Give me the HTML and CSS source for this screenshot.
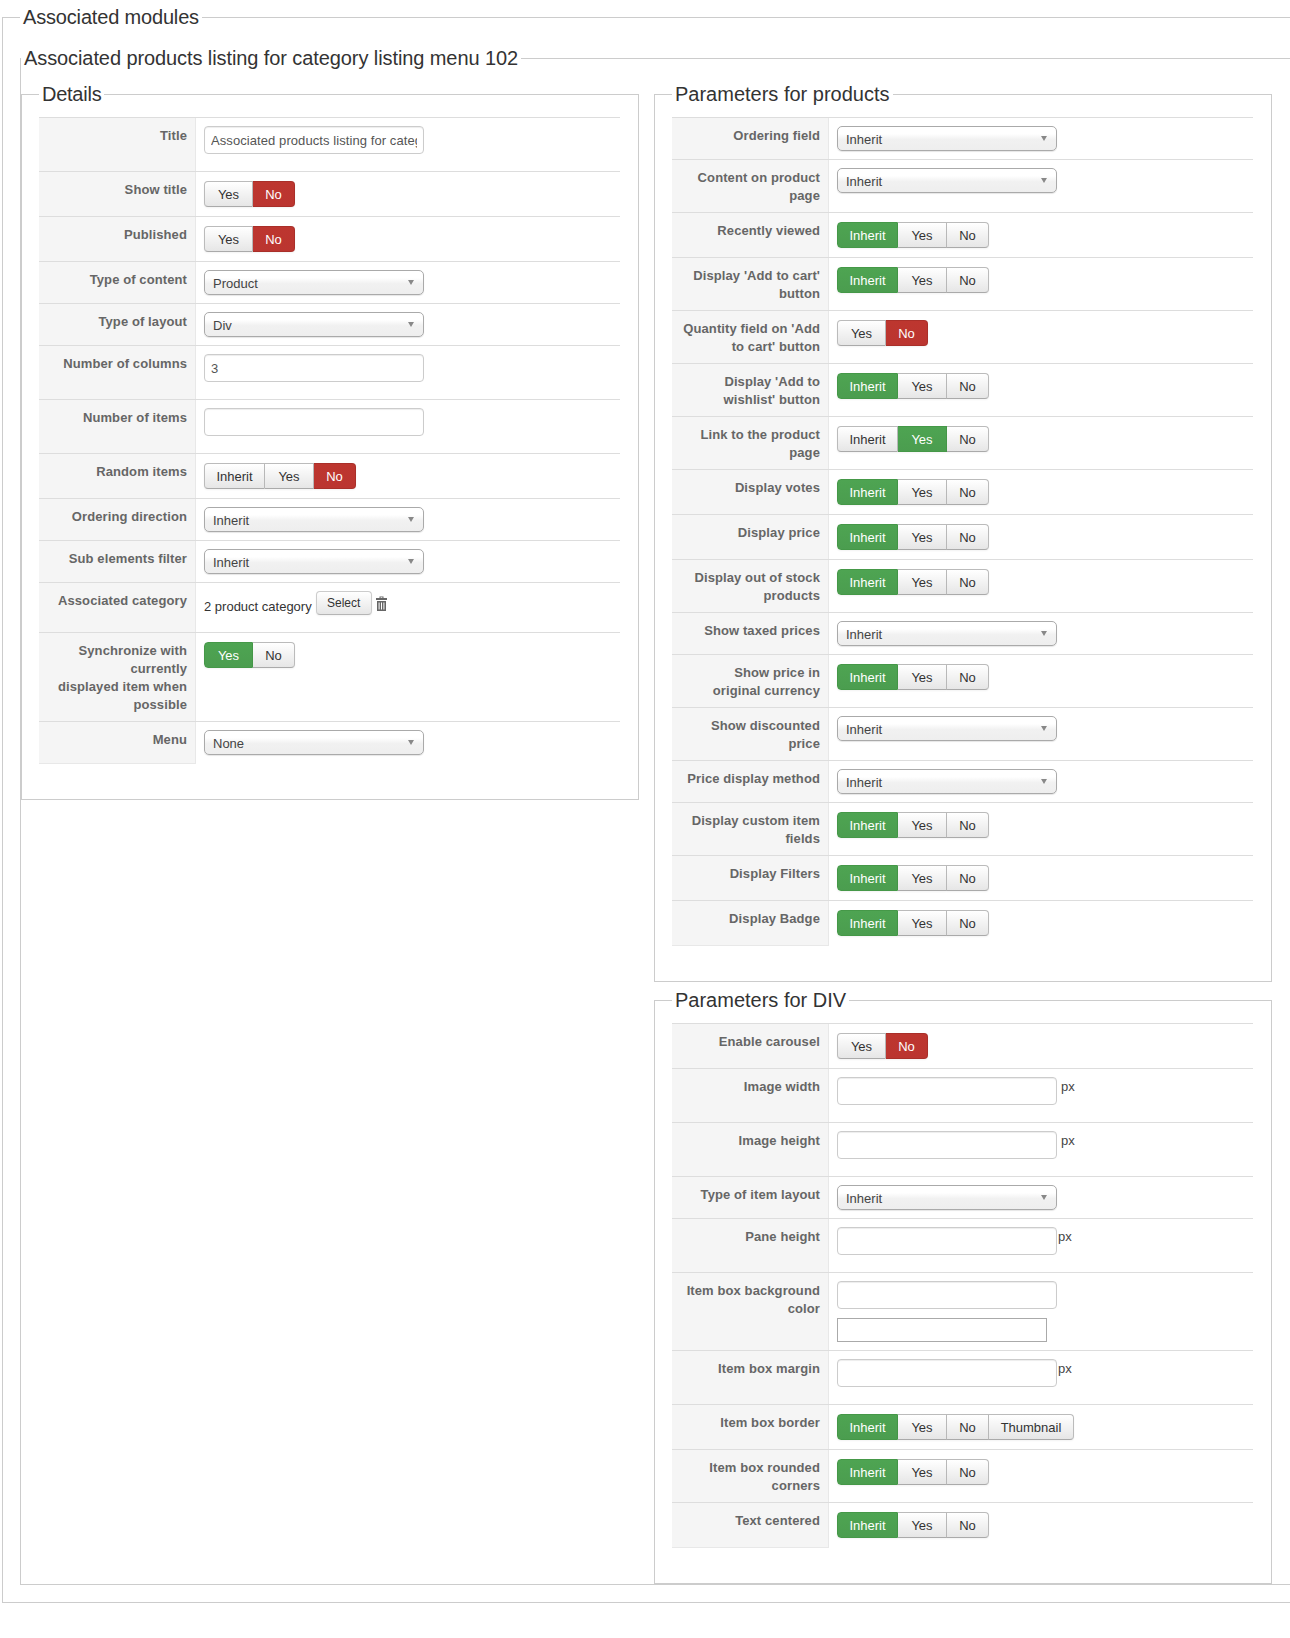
FILE: index.html
```html
<!DOCTYPE html>
<html lang="en">
<head>
<meta charset="utf-8">
<title>Associated modules</title>
<link rel="stylesheet" href="styles.css">
</head>
<body>
<fieldset class="fs fs-outer">
  <legend>Associated modules</legend>
  <fieldset class="fs fs-inner">
    <legend>Associated products listing for category listing menu 102</legend>
    <div class="columns">
      <fieldset class="fs panel panel-left">
        <legend>Details</legend>
        <div class="form">
          <div class="row"><div class="lbl">Title</div><div class="ctl"><input class="txt" type="text" value="Associated products listing for category listing menu 102"></div></div>
          <div class="row"><div class="lbl">Show title</div><div class="ctl"><div class="tg"><span class="b yes">Yes</span><span class="b no red">No</span></div></div></div>
          <div class="row"><div class="lbl">Published</div><div class="ctl"><div class="tg"><span class="b yes">Yes</span><span class="b no red">No</span></div></div></div>
          <div class="row"><div class="lbl">Type of content</div><div class="ctl"><div class="sel">Product<i class="arrow"></i></div></div></div>
          <div class="row"><div class="lbl">Type of layout</div><div class="ctl"><div class="sel">Div<i class="arrow"></i></div></div></div>
          <div class="row"><div class="lbl">Number of columns</div><div class="ctl"><input class="txt" type="text" value="3"></div></div>
          <div class="row"><div class="lbl">Number of items</div><div class="ctl"><input class="txt" type="text"></div></div>
          <div class="row"><div class="lbl">Random items</div><div class="ctl"><div class="tg"><span class="b inh">Inherit</span><span class="b yes">Yes</span><span class="b no red">No</span></div></div></div>
          <div class="row"><div class="lbl">Ordering direction</div><div class="ctl"><div class="sel">Inherit<i class="arrow"></i></div></div></div>
          <div class="row"><div class="lbl">Sub elements filter</div><div class="ctl"><div class="sel">Inherit<i class="arrow"></i></div></div></div>
          <div class="row"><div class="lbl">Associated category</div><div class="ctl"><div class="cat"><span class="cat-name">2 product category</span><span class="btn">Select</span><svg class="trash" viewBox="0 0 11 15" width="11" height="15" aria-hidden="true"><path d="M3.5 2V.5h4V2H11v2H0V2z M4.6 1.3V2h1.8v-.7z" fill-rule="evenodd"/><path d="M1 5h9v10H1z M2.6 6.5v7h1v-7z M5 6.5v7h1v-7z M7.4 6.5v7h1v-7z" fill-rule="evenodd"/></svg></div></div></div>
          <div class="row"><div class="lbl">Synchronize with currently<br>displayed item when possible</div><div class="ctl"><div class="tg"><span class="b yes green">Yes</span><span class="b no">No</span></div></div></div>
          <div class="row row-last"><div class="lbl">Menu</div><div class="ctl"><div class="sel">None<i class="arrow"></i></div></div></div>
        </div>
      </fieldset>
      <div class="stack">
        <fieldset class="fs panel">
          <legend>Parameters for products</legend>
          <div class="form">
            <div class="row"><div class="lbl">Ordering field</div><div class="ctl"><div class="sel">Inherit<i class="arrow"></i></div></div></div>
            <div class="row"><div class="lbl">Content on product page</div><div class="ctl"><div class="sel">Inherit<i class="arrow"></i></div></div></div>
            <div class="row"><div class="lbl">Recently viewed</div><div class="ctl"><div class="tg"><span class="b inh green">Inherit</span><span class="b yes">Yes</span><span class="b no">No</span></div></div></div>
            <div class="row"><div class="lbl">Display 'Add to cart' button</div><div class="ctl"><div class="tg"><span class="b inh green">Inherit</span><span class="b yes">Yes</span><span class="b no">No</span></div></div></div>
            <div class="row"><div class="lbl">Quantity field on 'Add to cart' button</div><div class="ctl"><div class="tg"><span class="b yes">Yes</span><span class="b no red">No</span></div></div></div>
            <div class="row"><div class="lbl">Display 'Add to wishlist' button</div><div class="ctl"><div class="tg"><span class="b inh green">Inherit</span><span class="b yes">Yes</span><span class="b no">No</span></div></div></div>
            <div class="row"><div class="lbl">Link to the product page</div><div class="ctl"><div class="tg"><span class="b inh">Inherit</span><span class="b yes green">Yes</span><span class="b no">No</span></div></div></div>
            <div class="row"><div class="lbl">Display votes</div><div class="ctl"><div class="tg"><span class="b inh green">Inherit</span><span class="b yes">Yes</span><span class="b no">No</span></div></div></div>
            <div class="row"><div class="lbl">Display price</div><div class="ctl"><div class="tg"><span class="b inh green">Inherit</span><span class="b yes">Yes</span><span class="b no">No</span></div></div></div>
            <div class="row"><div class="lbl">Display out of stock products</div><div class="ctl"><div class="tg"><span class="b inh green">Inherit</span><span class="b yes">Yes</span><span class="b no">No</span></div></div></div>
            <div class="row"><div class="lbl">Show taxed prices</div><div class="ctl"><div class="sel">Inherit<i class="arrow"></i></div></div></div>
            <div class="row"><div class="lbl">Show price in<br>original currency</div><div class="ctl"><div class="tg"><span class="b inh green">Inherit</span><span class="b yes">Yes</span><span class="b no">No</span></div></div></div>
            <div class="row"><div class="lbl">Show discounted price</div><div class="ctl"><div class="sel">Inherit<i class="arrow"></i></div></div></div>
            <div class="row"><div class="lbl">Price display method</div><div class="ctl"><div class="sel">Inherit<i class="arrow"></i></div></div></div>
            <div class="row"><div class="lbl">Display custom item fields</div><div class="ctl"><div class="tg"><span class="b inh green">Inherit</span><span class="b yes">Yes</span><span class="b no">No</span></div></div></div>
            <div class="row"><div class="lbl">Display Filters</div><div class="ctl"><div class="tg"><span class="b inh green">Inherit</span><span class="b yes">Yes</span><span class="b no">No</span></div></div></div>
            <div class="row row-last"><div class="lbl">Display Badge</div><div class="ctl"><div class="tg"><span class="b inh green">Inherit</span><span class="b yes">Yes</span><span class="b no">No</span></div></div></div>
          </div>
        </fieldset>
        <fieldset class="fs panel">
          <legend>Parameters for DIV</legend>
          <div class="form">
            <div class="row"><div class="lbl">Enable carousel</div><div class="ctl"><div class="tg"><span class="b yes">Yes</span><span class="b no red">No</span></div></div></div>
            <div class="row"><div class="lbl">Image width</div><div class="ctl unit-line"><input class="txt" type="text"><span class="unit unit-gap">px</span></div></div>
            <div class="row"><div class="lbl">Image height</div><div class="ctl unit-line"><input class="txt" type="text"><span class="unit unit-gap">px</span></div></div>
            <div class="row"><div class="lbl">Type of item layout</div><div class="ctl"><div class="sel">Inherit<i class="arrow"></i></div></div></div>
            <div class="row"><div class="lbl">Pane height</div><div class="ctl unit-line"><input class="txt" type="text"><span class="unit">px</span></div></div>
            <div class="row"><div class="lbl">Item box background color</div><div class="ctl"><input class="txt" type="text"><div class="swatch"></div></div></div>
            <div class="row"><div class="lbl">Item box margin</div><div class="ctl unit-line"><input class="txt" type="text"><span class="unit">px</span></div></div>
            <div class="row"><div class="lbl">Item box border</div><div class="ctl"><div class="tg"><span class="b inh green">Inherit</span><span class="b yes">Yes</span><span class="b no">No</span><span class="b thumb">Thumbnail</span></div></div></div>
            <div class="row"><div class="lbl">Item box rounded corners</div><div class="ctl"><div class="tg"><span class="b inh green">Inherit</span><span class="b yes">Yes</span><span class="b no">No</span></div></div></div>
            <div class="row row-last"><div class="lbl">Text centered</div><div class="ctl"><div class="tg"><span class="b inh green">Inherit</span><span class="b yes">Yes</span><span class="b no">No</span></div></div></div>
          </div>
        </fieldset>
      </div>
    </div>
  </fieldset>
</fieldset>
</body>
</html>
```

FILE: styles.css
```css
* { box-sizing: border-box; }
html, body { overflow-x: hidden; }
body {
  margin: 0;
  padding: 5px 0 0 2px;
  background: #fff;
  font-family: "Liberation Sans", Arial, sans-serif;
  font-size: 13px;
  line-height: 18px;
  color: #333;
}
.fs {
  margin: 0;
  min-width: 0;
  border: 1px solid #ccc;
}
.fs > legend {
  padding: 0 3px;
  font-size: 20px;
  line-height: 24px;
  color: #333;
}
.fs-outer {
  width: 1340px;
  padding: 17px 0 17px 17px;
}
.fs-outer > legend { letter-spacing: -.17px; }
.fs-inner {
  padding: 12px 0 0 0;
}
.fs-inner > legend { letter-spacing: -.09px; }
.columns {
  display: grid;
  grid-template-columns: 618px 618px;
  column-gap: 15px;
  align-items: start;
}
.stack {
  display: flex;
  flex-direction: column;
  gap: 6px;
}
.panel {
  padding: 11px 18px 35px 17px;
}
.panel-left > legend { letter-spacing: -.25px; }

.row {
  display: flex;
  border-top: 1px solid #ddd;
}
.row-last .lbl { border-bottom: 1px solid #e8e8e8; }
.row-last .ctl { padding-bottom: 9px; }
.lbl {
  flex: none;
  width: 157px;
  padding: 9px 8px 7px 6px;
  background: #f5f5f5;
  border-right: 1px solid #e8e8e8;
  text-align: right;
  font-weight: bold;
  letter-spacing: .1px;
  color: #666;
}
.ctl {
  flex: 1;
  min-width: 0;
  padding: 8px;
}
.unit-line {
  display: flex;
  align-items: flex-start;
}
.txt {
  display: block;
  width: 220px;
  height: 28px;
  margin: 0 0 9px;
  padding: 4px 6px;
  border: 1px solid #ccc;
  border-radius: 4px;
  box-shadow: inset 0 1px 1px rgba(0, 0, 0, .075);
  background: #fff;
  font: 13px "Liberation Sans", Arial, sans-serif;
  letter-spacing: .08px;
  color: #555;
}
.unit { padding-top: 1px; margin-left: 1px; color: #444; }
.unit-gap { margin-left: 4px; }
.sel {
  position: relative;
  width: 220px;
  height: 25px;
  padding: 3px 8px 0;
  border: 1px solid #aaa;
  border-radius: 5px;
  background: linear-gradient(#fff 0, #fff 30%, #f1f1f1 55%, #eee 100%);
  box-shadow: 0 1px 1px rgba(0, 0, 0, .1);
  color: #444;
  line-height: 20px;
}
.arrow {
  position: absolute;
  right: 9px;
  top: 9px;
  border-style: solid;
  border-width: 5px 3.5px 0;
  border-color: #888 transparent transparent;
}
.tg {
  display: flex;
  margin: 1px 0;
  height: 26px;
}
.b {
  display: block;
  height: 26px;
  border: 1px solid #bbb;
  border-left-width: 0;
  border-bottom-color: #aaa;
  background: linear-gradient(#fff, #e6e6e6);
  box-shadow: 0 1px 2px rgba(0, 0, 0, .05);
  text-align: center;
  line-height: 26px;
  color: #333;
}
.b:first-child {
  border-left-width: 1px;
  border-radius: 4px 0 0 4px;
}
.b:last-child { border-radius: 0 4px 4px 0; }
.inh { width: 61px; }
.yes { width: 49px; }
.no { width: 42px; }
.thumb { width: 85px; }
.green {
  background: linear-gradient(#4ea452, #4b9d4f);
  border-color: #459848;
  color: #fff;
}
.red {
  background: linear-gradient(#bd362f, #bb3530);
  border-color: #a92f29;
  color: #fff;
}
.cat {
  display: flex;
  align-items: flex-start;
  height: 33px;
}
.cat-name { margin-top: 7px; white-space: nowrap; }
.btn {
  display: block;
  width: 56px;
  height: 24px;
  margin-left: 4px;
  border: 1px solid #ccc;
  border-bottom-color: #b5b5b5;
  border-radius: 4px;
  background: linear-gradient(#fff, #e6e6e6);
  box-shadow: 0 1px 2px rgba(0, 0, 0, .05);
  text-align: center;
  font-size: 12px;
  line-height: 22px;
  color: #333;
}
.trash {
  margin: 5px 0 0 4px;
  fill: #666;
}
.swatch {
  width: 210px;
  height: 24px;
  border: 1px solid #aaa;
}
```
